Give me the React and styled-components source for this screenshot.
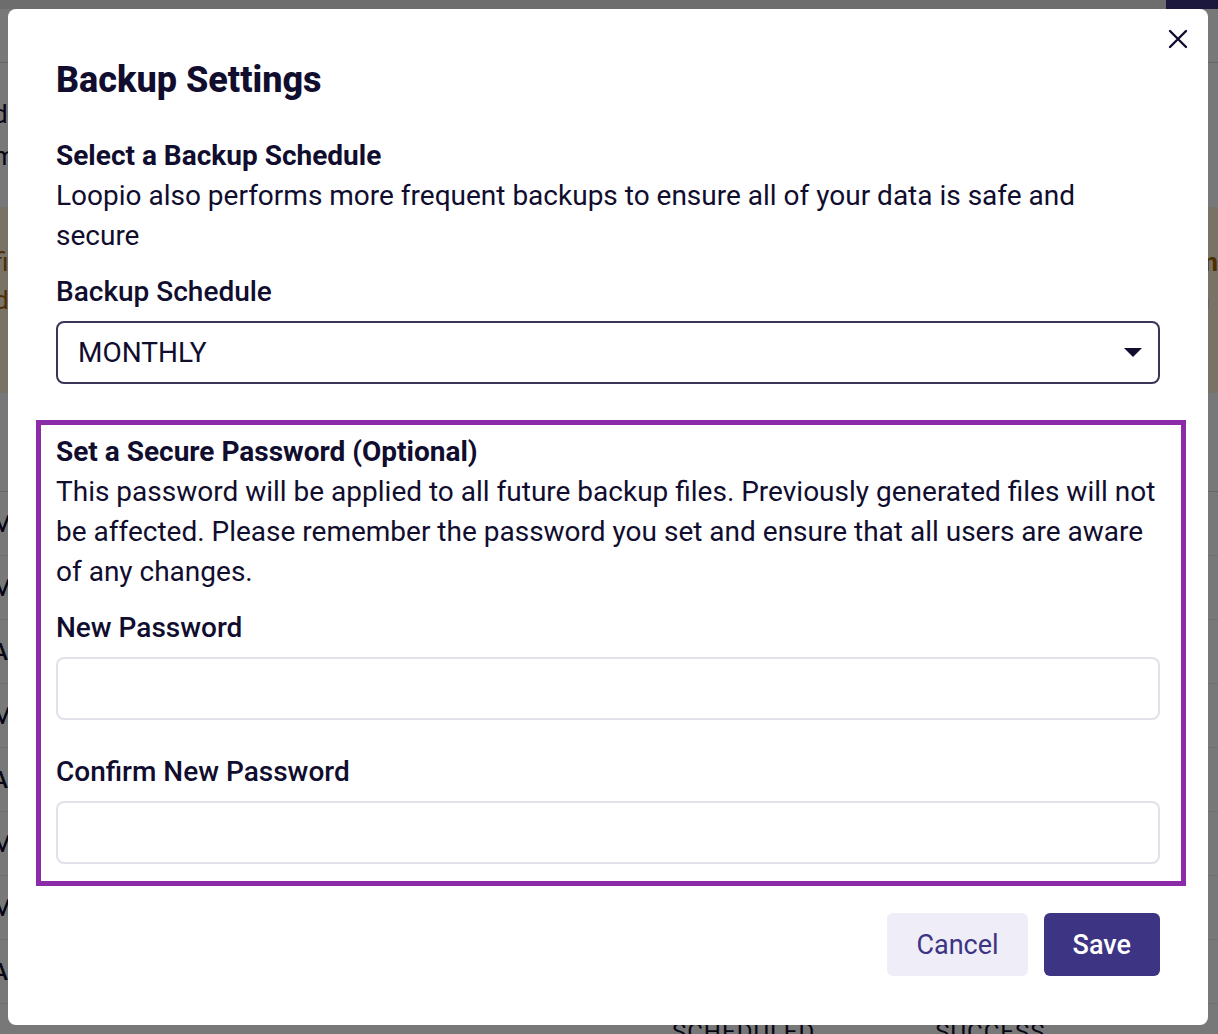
import React from 'react'
import styled, { createGlobalStyle } from 'styled-components'

const GlobalStyle = createGlobalStyle`
  html, body {
    margin: 0;
    padding: 0;
    background: #ffffff;
    font-family: Roboto, "Liberation Sans", Arial, sans-serif;
    color: #100d2e;
  }
  * { box-sizing: border-box; }
`

/* ---------- page behind the dialog ---------- */

const Page = styled.div`
  width: 1218px;
  height: 1034px;
  overflow: hidden;
  background: #ffffff;
`

const TopBar = styled.div`
  height: 9px;
  background: #e8e8ea;
  display: flex;
  justify-content: flex-end;
`

const TopButton = styled.div`
  width: 52px;
  background: #3d3483;
`

const PageHeader = styled.div`
  height: 54px;
  border-bottom: 1px solid #d8d8dc;
`

const PageText = styled.div`
  padding: 30px 0 0 0;
  font-size: 26px;
  line-height: 42px;
  color: #100d2e;
  margin-left: -7px;
`

const Banner = styled.div`
  margin-top: 30px;
  height: 186px;
  background: #fff3dc;
  padding: 36px 0 0 0;
  font-size: 26px;
  line-height: 38px;
  color: #a56400;
  display: flex;
  justify-content: space-between;
`

const BannerCol = styled.div`
  margin-left: ${p => p.$offset || 0}px;
`

const Table = styled.div`
  margin-top: 98px;
  border-top: 1px solid #d8d8dc;
`

const TableRow = styled.div`
  height: 64px;
  border-bottom: 1px solid #ececf0;
  display: flex;
  align-items: center;
  font-size: 24px;
  font-weight: 500;
  margin-left: -8px;
`

const TableFoot = styled.div`
  display: flex;
  gap: 120px;
  padding-left: 672px;
  padding-top: 14px;
  font-size: 24px;
  letter-spacing: 1px;
  color: #100d2e;
`

/* ---------- dialog ---------- */

const Overlay = styled.div`
  position: fixed;
  inset: 0;
  background: rgba(0, 0, 0, 0.53);
  display: flex;
  justify-content: center;
  align-items: flex-start;
  padding-top: 9px;
`

const Modal = styled.div`
  position: relative;
  width: 1200px;
  background: #ffffff;
  border-radius: 8px;
  padding: 51px 48px 49px 48px;
  margin-right: 2px;
`

const CloseButton = styled.button`
  position: absolute;
  top: 17px;
  right: 17px;
  width: 26px;
  height: 26px;
  padding: 0;
  border: none;
  background: transparent;
  display: flex;
  align-items: center;
  justify-content: center;
  cursor: pointer;
`

const Title = styled.h1`
  margin: 0;
  font-size: 36px;
  line-height: 40px;
  font-weight: 800;
  color: #100d2e;
`

const SectionTitle = styled.h2`
  margin: 0;
  margin-top: ${p => p.$top || 0}px;
  font-size: 28px;
  line-height: 40px;
  font-weight: 700;
  color: #100d2e;
`

const Description = styled.p`
  margin: 0;
  font-size: 28px;
  line-height: 40px;
  font-weight: 400;
  color: #100d2e;
`

const Label = styled.label`
  display: block;
  margin-top: ${p => p.$top || 16}px;
  margin-bottom: 9px;
  font-size: 28px;
  line-height: 40px;
  font-weight: 500;
  color: #100d2e;
`

const SelectBox = styled.div`
  height: 63px;
  border: 2px solid #3a3556;
  border-radius: 8px;
  display: flex;
  align-items: center;
  justify-content: space-between;
  padding: 0 16px 0 20px;
  font-size: 28px;
  color: #100d2e;
`

const PasswordBox = styled.div`
  margin: 36px -26px 0 -20px;
  border: 5px solid #8c2ba7;
  padding: 7px 21px 17px 15px;
`

const TextInput = styled.input`
  display: block;
  width: 100%;
  height: 63px;
  border: 2px solid #e2e1ea;
  border-radius: 8px;
  padding: 0 20px;
  font-size: 28px;
  font-family: inherit;
  color: #100d2e;
  outline: none;
`

const Footer = styled.div`
  margin-top: 27px;
  display: flex;
  justify-content: flex-end;
  gap: 16px;
`

const Button = styled.button`
  height: 63px;
  padding: 0 ${p => p.$px || 28}px;
  border: none;
  border-radius: 6px;
  font-family: inherit;
  font-size: 27px;
  font-weight: ${p => (p.$primary ? 500 : 400)};
  background: ${p => (p.$primary ? '#3d3483' : '#efedf7')};
  color: ${p => (p.$primary ? '#ffffff' : '#3d3483')};
  cursor: pointer;
`

const rows = ['M', 'M', 'A', 'M', 'AI', 'M', 'M', 'AI']

export default function App() {
  return (
    <>
      <GlobalStyle />
      <Page>
        <TopBar>
          <TopButton />
        </TopBar>
        <PageHeader />
        <PageText>
          <div>d</div>
          <div>m</div>
        </PageText>
        <Banner>
          <BannerCol $offset={-6}>
            <div>fi</div>
            <div>d</div>
          </BannerCol>
          <BannerCol>
            <div><b>m</b></div>
            <div>n</div>
          </BannerCol>
        </Banner>
        <Table>
          {rows.map((r, i) => (
            <TableRow key={i}>{r}</TableRow>
          ))}
        </Table>
        <TableFoot>
          <span>SCHEDULED</span>
          <span>SUCCESS</span>
        </TableFoot>
      </Page>

      <Overlay>
        <Modal>
          <CloseButton aria-label="Close">
            <svg width="20" height="20" viewBox="0 0 20 20">
              <path d="M2 2 L18 18 M18 2 L2 18" stroke="#100d2e" strokeWidth="2.4" strokeLinecap="round" />
            </svg>
          </CloseButton>

          <Title>Backup Settings</Title>

          <SectionTitle $top={36}>Select a Backup Schedule</SectionTitle>
          <Description>
            Loopio also performs more frequent backups to ensure all of your data is safe and secure
          </Description>

          <Label $top={16}>Backup Schedule</Label>
          <SelectBox>
            <span>MONTHLY</span>
            <svg width="18" height="10" viewBox="0 0 18 10">
              <path d="M0 0 H18 L9 9 Z" fill="#100d2e" />
            </svg>
          </SelectBox>

          <PasswordBox>
            <SectionTitle>Set a Secure Password (Optional)</SectionTitle>
            <Description>
              This password will be applied to all future backup files. Previously generated files will not
              be affected. Please remember the password you set and ensure that all users are aware of any
              changes.
            </Description>

            <Label $top={16}>New Password</Label>
            <TextInput type="password" />

            <Label $top={32}>Confirm New Password</Label>
            <TextInput type="password" />
          </PasswordBox>

          <Footer>
            <Button $px={29}>Cancel</Button>
            <Button $primary $px={29}>Save</Button>
          </Footer>
        </Modal>
      </Overlay>
    </>
  )
}
